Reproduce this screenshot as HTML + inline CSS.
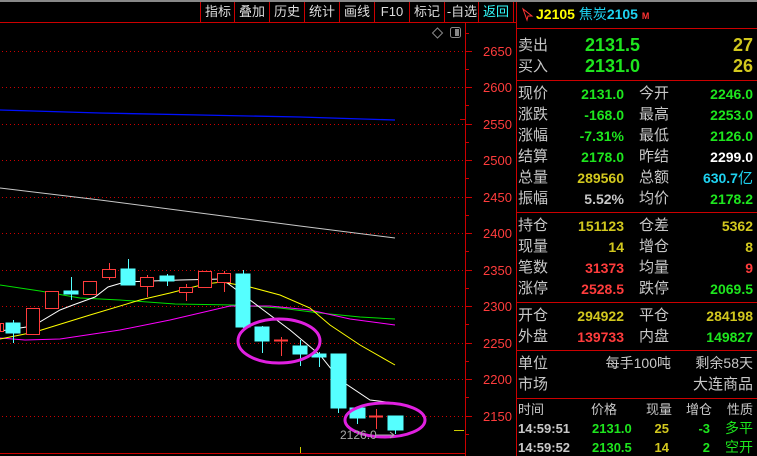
<!DOCTYPE html>
<html><head><meta charset="utf-8"><style>
body{margin:0;width:757px;height:456px;background:#000;overflow:hidden;position:relative;font-family:"Liberation Sans","Noto Sans CJK SC",sans-serif}
.a{position:absolute;white-space:nowrap;line-height:1}
.t{font-size:13px;color:#ddd;top:5px;width:34px;text-align:center}
.l{font-size:15px;color:#c8c8c8}
.v{font-size:14px;text-align:right;font-weight:bold}
.g{color:#1ee61e}.y{color:#d2c81e}.r{color:#ff3c3c}.w{color:#fff}.c{color:#1ed2f0}.s{color:#c8c8c8}
</style></head><body>
<div class="a" style="left:0;top:0;width:757px;height:2px;background:#888"></div>
<svg class="a" style="left:0;top:0" width="757" height="456">
<g stroke="#c00" stroke-width="1" fill="none">
<line x1="0" y1="22.5" x2="516" y2="22.5"/>
<line x1="465.5" y1="22" x2="465.5" y2="456"/>
<line x1="516.5" y1="2" x2="516.5" y2="456"/>
<line x1="0" y1="453.5" x2="465" y2="453.5"/>
<line x1="200.5" y1="2" x2="200.5" y2="22"/><line x1="234.5" y1="2" x2="234.5" y2="22"/><line x1="269.5" y1="2" x2="269.5" y2="22"/><line x1="304.5" y1="2" x2="304.5" y2="22"/><line x1="339.5" y1="2" x2="339.5" y2="22"/><line x1="374.5" y1="2" x2="374.5" y2="22"/><line x1="409.5" y1="2" x2="409.5" y2="22"/><line x1="444.5" y1="2" x2="444.5" y2="22"/><line x1="478.5" y1="2" x2="478.5" y2="22"/><line x1="513.5" y1="2" x2="513.5" y2="22"/>
<line x1="517" y1="28.5" x2="757" y2="28.5"/><line x1="517" y1="80.5" x2="757" y2="80.5"/><line x1="517" y1="212.5" x2="757" y2="212.5"/><line x1="517" y1="302.5" x2="757" y2="302.5"/><line x1="517" y1="350.5" x2="757" y2="350.5"/><line x1="517" y1="398.5" x2="757" y2="398.5"/>
</g>
<g stroke="#c00" stroke-dasharray="1,3">
<line x1="2" y1="51.5" x2="465" y2="51.5"/><line x1="2" y1="87.5" x2="465" y2="87.5"/><line x1="2" y1="124.5" x2="465" y2="124.5"/><line x1="2" y1="160.5" x2="465" y2="160.5"/><line x1="2" y1="197.5" x2="465" y2="197.5"/><line x1="2" y1="233.5" x2="465" y2="233.5"/><line x1="2" y1="270.5" x2="465" y2="270.5"/><line x1="2" y1="306.5" x2="465" y2="306.5"/><line x1="2" y1="343.5" x2="465" y2="343.5"/><line x1="2" y1="379.5" x2="465" y2="379.5"/><line x1="2" y1="416.5" x2="465" y2="416.5"/>
</g>
<g stroke="#c00">
<path d="M465 51.5h7M465 87.5h7M465 124.5h7M465 160.5h7M465 197.5h7M465 233.5h7M465 270.5h7M465 306.5h7M465 343.5h7M465 379.5h7M465 416.5h7"/>
<path d="M465 69.5h4M465 105.5h4M465 142.5h4M465 178.5h4M465 215.5h4M465 251.5h4M465 288.5h4M465 324.5h4M465 361.5h4M465 397.5h4M465 434.5h4M465 33.5h4"/>
<path d="M460 119.5h5"/>
</g>
<g font-family="Liberation Sans" font-size="13" fill="#ff3c3c">
<text x="483" y="56">2650</text><text x="483" y="92">2600</text><text x="483" y="129">2550</text><text x="483" y="165">2500</text><text x="483" y="202">2450</text><text x="483" y="238">2400</text><text x="483" y="275">2350</text><text x="483" y="311">2300</text><text x="483" y="348">2250</text><text x="483" y="384">2200</text><text x="483" y="421">2150</text>
</g>
<path d="M437.5 28l5 5-5 5-5-5z" stroke="#888" fill="none"/>
<rect x="450.5" y="27.5" width="10" height="10" rx="2" stroke="#888" fill="none"/><rect x="455" y="29" width="4" height="7" fill="#888"/>
<polyline fill="none" stroke="#0010ff" stroke-width="1.3" points="0,110 100,113 200,115 300,117 395,120"/>
<polyline fill="none" stroke="#c8c8c8" stroke-width="1" points="0,188 100,200 200,213 300,226 395,238"/>
<polyline fill="none" stroke="#00e000" stroke-width="1" points="0,285 40,291 80,298 120,300 175,304 235,305 280,308 320,313 360,317 395,319"/>
<polyline fill="none" stroke="#ff00ff" stroke-width="1" points="0,338 25,340 60,339 120,330 170,320 230,306 270,306 310,310 350,319 395,325"/>
<polyline fill="none" stroke="#ffff00" stroke-width="1" points="0,339 35,332 90,315 140,300 170,293 205,284 222,282 250,287 280,295 310,308 330,325 360,345 395,365"/>
<polyline fill="none" stroke="#fff" stroke-width="1" points="0,331 33,326 60,310 73,305 95,297 108,287 125,282 180,280 222,279 250,300 290,330 320,355 340,380 370,400 395,403"/>
<g stroke="#5ff" fill="#5ff">
<path d="M13.5 320v23M71.5 277v23M128.5 259v26M167.5 274v12M243.5 270v58M262.5 326v27M300.5 340v26M319.5 352v15M338.5 354v59M357.5 408v16M395.5 416v18"/>
<rect x="6" y="323" width="14" height="10"/><rect x="64" y="291" width="14" height="3"/><rect x="121" y="269" width="14" height="16"/><rect x="160" y="276" width="14" height="5"/><rect x="236" y="274" width="14" height="53"/><rect x="255" y="327" width="14" height="14"/><rect x="293" y="346" width="14" height="8"/><rect x="312" y="354" width="14" height="3"/><rect x="331" y="354" width="15" height="54"/><rect x="350" y="408" width="15" height="10"/><rect x="388" y="416" width="15" height="14"/>
</g>
<g stroke="#ff3c3c" fill="#000">
<path d="M109.5 263v6M109.5 277v3M147.5 275v2M147.5 286v11M186.5 284v3M186.5 292v9M224.5 271v2M224.5 282v10M281.5 337v19M376.5 409v20"/>
<rect x="0.5" y="323.5" width="3" height="8"/><rect x="26.5" y="308.5" width="13" height="26"/><rect x="45.5" y="291.5" width="13" height="17"/><rect x="83.5" y="281.5" width="13" height="13"/><rect x="102.5" y="269.5" width="13" height="8"/><rect x="140.5" y="277.5" width="13" height="9"/><rect x="179.5" y="287.5" width="13" height="5"/><rect x="198.5" y="271.5" width="13" height="16"/><rect x="217.5" y="273.5" width="13" height="9"/>
<path d="M274 340.5h14M369 416.5h14" stroke-width="2"/>
</g>
<ellipse cx="279" cy="341" rx="41" ry="22" fill="none" stroke="#e020e0" stroke-width="3"/>
<ellipse cx="385" cy="420" rx="40" ry="17" fill="none" stroke="#e020e0" stroke-width="3"/>
<text x="340" y="439" font-family="Liberation Sans" font-size="12" fill="#aaa">2126.0</text>
<path d="M376 435h18M390 432l4 3-4 3" stroke="#aaa" fill="none"/>
<path d="M454 430.5h10" stroke="#cc0"/><path d="M300.5 447v6" stroke="#cc0"/>
<path d="M523 9l4 11 1-4 4 0z" fill="none" stroke="#f33"/>
</svg>
<div class="a t" style="left:201px">指标</div><div class="a t" style="left:235px">叠加</div><div class="a t" style="left:270px">历史</div><div class="a t" style="left:305px">统计</div><div class="a t" style="left:340px">画线</div><div class="a t" style="left:375px">F10</div><div class="a t" style="left:410px">标记</div><div class="a t" style="left:445px">-自选</div><div class="a t" style="left:479px;color:#3ff">返回</div>

<div class="a" style="left:536px;top:7px;font-size:14px;font-weight:bold;color:#ff0">J2105 <span style="color:#1ed2f0;font-weight:normal">焦炭</span><span style="color:#1ed2f0">2105</span> <span style="color:#f33;font-size:9px">M</span></div>

<div class="a l" style="left:518px;top:38px">卖出</div><div class="a g" style="left:585px;top:36px;font-size:18px;font-weight:bold">2131.5</div><div class="a v y" style="right:4px;top:36px;font-size:18px;font-weight:bold">27</div>
<div class="a l" style="left:518px;top:59px">买入</div><div class="a g" style="left:585px;top:57px;font-size:18px;font-weight:bold">2131.0</div><div class="a v y" style="right:4px;top:57px;font-size:18px;font-weight:bold">26</div>

<div class="a l" style="left:518px;top:86px">现价</div><div class="a v g" style="right:133px;top:87px">2131.0</div><div class="a l" style="left:639px;top:86px">今开</div><div class="a v g" style="right:4px;top:87px">2246.0</div>
<div class="a l" style="left:518px;top:107px">涨跌</div><div class="a v g" style="right:133px;top:108px">-168.0</div><div class="a l" style="left:639px;top:107px">最高</div><div class="a v g" style="right:4px;top:108px">2253.0</div>
<div class="a l" style="left:518px;top:128px">涨幅</div><div class="a v g" style="right:133px;top:129px">-7.31%</div><div class="a l" style="left:639px;top:128px">最低</div><div class="a v g" style="right:4px;top:129px">2126.0</div>
<div class="a l" style="left:518px;top:149px">结算</div><div class="a v g" style="right:133px;top:150px">2178.0</div><div class="a l" style="left:639px;top:149px">昨结</div><div class="a v w" style="right:4px;top:150px">2299.0</div>
<div class="a l" style="left:518px;top:170px">总量</div><div class="a v y" style="right:133px;top:171px">289560</div><div class="a l" style="left:639px;top:170px">总额</div><div class="a v c" style="right:4px;top:171px">630.7<span style="font-weight:normal;font-size:15px">亿</span></div>
<div class="a l" style="left:518px;top:191px">振幅</div><div class="a v s" style="right:133px;top:192px">5.52%</div><div class="a l" style="left:639px;top:191px">均价</div><div class="a v g" style="right:4px;top:192px">2178.2</div>

<div class="a l" style="left:518px;top:218px">持仓</div><div class="a v y" style="right:133px;top:219px">151123</div><div class="a l" style="left:639px;top:218px">仓差</div><div class="a v y" style="right:4px;top:219px">5362</div>
<div class="a l" style="left:518px;top:239px">现量</div><div class="a v y" style="right:133px;top:240px">14</div><div class="a l" style="left:639px;top:239px">增仓</div><div class="a v y" style="right:4px;top:240px">8</div>
<div class="a l" style="left:518px;top:260px">笔数</div><div class="a v r" style="right:133px;top:261px">31373</div><div class="a l" style="left:639px;top:260px">均量</div><div class="a v r" style="right:4px;top:261px">9</div>
<div class="a l" style="left:518px;top:281px">涨停</div><div class="a v r" style="right:133px;top:282px">2528.5</div><div class="a l" style="left:639px;top:281px">跌停</div><div class="a v g" style="right:4px;top:282px">2069.5</div>

<div class="a l" style="left:518px;top:308px">开仓</div><div class="a v y" style="right:133px;top:309px">294922</div><div class="a l" style="left:639px;top:308px">平仓</div><div class="a v y" style="right:4px;top:309px">284198</div>
<div class="a l" style="left:518px;top:329px">外盘</div><div class="a v r" style="right:133px;top:330px">139733</div><div class="a l" style="left:639px;top:329px">内盘</div><div class="a v g" style="right:4px;top:330px">149827</div>

<div class="a l" style="left:518px;top:356px">单位</div><div class="a l" style="right:86px;top:356px;font-size:14px">每手100吨</div><div class="a l" style="right:4px;top:356px;font-size:14px">剩余58天</div>
<div class="a l" style="left:518px;top:377px">市场</div><div class="a l" style="right:4px;top:377px">大连商品</div>

<div class="a l" style="left:518px;top:403px;font-size:13px">时间</div><div class="a l" style="left:591px;top:403px;font-size:13px">价格</div><div class="a l" style="left:646px;top:403px;font-size:13px">现量</div><div class="a l" style="left:686px;top:403px;font-size:13px">增仓</div><div class="a l" style="right:4px;top:403px;font-size:13px">性质</div>
<div class="a s" style="left:518px;top:422px;font-size:13px;font-weight:bold">14:59:51</div><div class="a g" style="left:592px;top:422px;font-size:13px;font-weight:bold">2131.0</div><div class="a v y" style="right:88px;top:422px;font-size:13px;font-weight:bold">25</div><div class="a v g" style="right:47px;top:422px;font-size:13px;font-weight:bold">-3</div><div class="a g" style="right:4px;top:421px;font-size:14px">多平</div>
<div class="a s" style="left:518px;top:441px;font-size:13px;font-weight:bold">14:59:52</div><div class="a g" style="left:592px;top:441px;font-size:13px;font-weight:bold">2130.5</div><div class="a v y" style="right:88px;top:441px;font-size:13px;font-weight:bold">14</div><div class="a v g" style="right:47px;top:441px;font-size:13px;font-weight:bold">2</div><div class="a g" style="right:4px;top:440px;font-size:14px">空开</div>
</body></html>
